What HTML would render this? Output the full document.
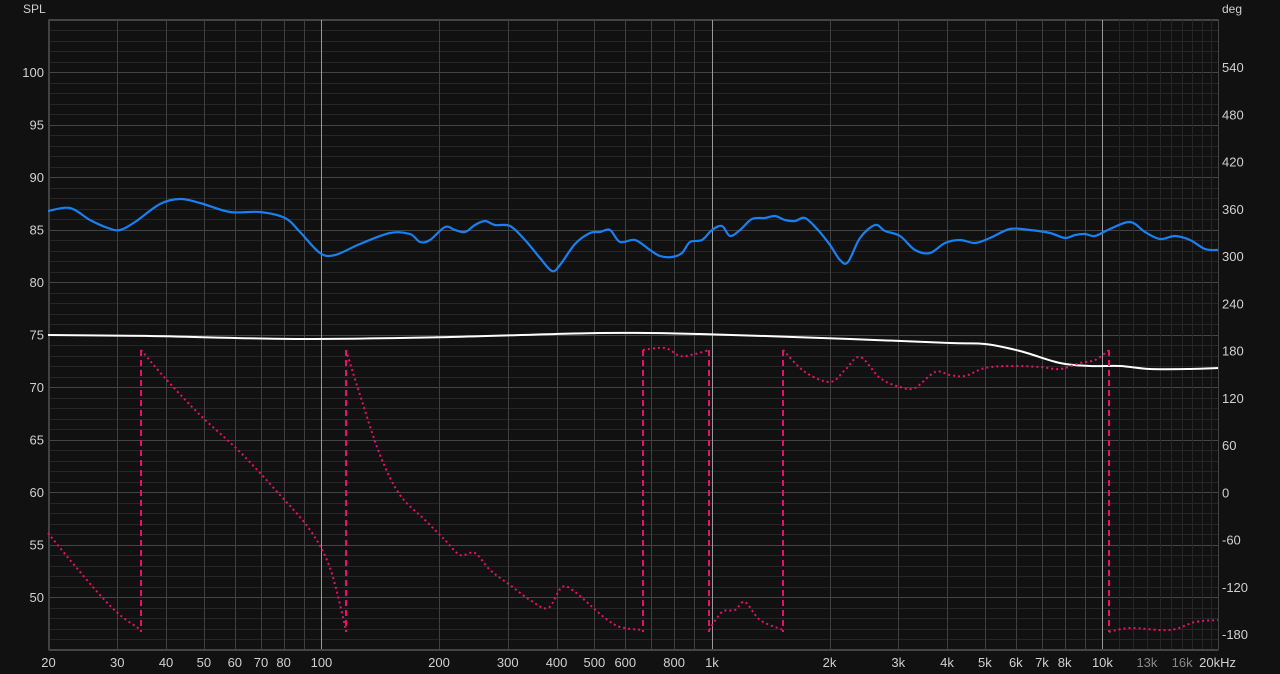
<!DOCTYPE html>
<html><head><meta charset="utf-8"><style>
html,body{margin:0;padding:0;background:#111;}
svg{display:block;font-family:"Liberation Sans",sans-serif;}
</style></head><body>
<svg id="s" width="1280" height="674" viewBox="0 0 1280 674" xmlns="http://www.w3.org/2000/svg">
<rect width="1280" height="674" fill="#111"/>
<g id="grid"></g>
<g id="lbl" font-size="13" fill="#d0d0d0"></g>
<text x="23" y="13" font-size="12" fill="#d0d0d0">SPL</text>
<text x="1222" y="13" font-size="12" fill="#d0d0d0">deg</text>
<path id="wh" fill="none" stroke="#fff" stroke-width="2"/>
<path id="bl" fill="none" stroke="#1a7ff0" stroke-width="2.2"/>
<g fill="none" stroke="#e8106a" stroke-width="2" stroke-dasharray="6,4">
<line x1="141" y1="350" x2="141" y2="632"/><line x1="346" y1="350" x2="346" y2="632"/>
<line x1="643" y1="350" x2="643" y2="632"/><line x1="709" y1="350" x2="709" y2="632"/>
<line x1="783" y1="350" x2="783" y2="632"/><line x1="1109" y1="350" x2="1109" y2="632"/>
</g>
<g id="ph" fill="none" stroke="#e8106a" stroke-width="2" stroke-dasharray="2,3"></g>
</svg>
<script>
(function(){
var NS="http://www.w3.org/2000/svg",g=document.getElementById('grid'),L=document.getElementById('lbl');
var X0=48.5,X1=1218.5,Y0=19.5,Y1=649.5;
function fx(f){return 48.5+390.5*Math.log10(f/20);}
function ln(x1,y1,x2,y2,c){var e=document.createElementNS(NS,'line');e.setAttribute('x1',x1);e.setAttribute('y1',y1);e.setAttribute('x2',x2);e.setAttribute('y2',y2);e.setAttribute('stroke',c);e.setAttribute('stroke-width',1);g.appendChild(e);}
function tx(x,y,s,a,c){var e=document.createElementNS(NS,'text');e.setAttribute('x',x);e.setAttribute('y',y);e.setAttribute('text-anchor',a);if(c)e.setAttribute('fill',c);e.textContent=s;L.appendChild(e);}
for(var d=105;d>=45;d--){var y=72+(100-d)*10.5;if(y<Y0||y>Y1)continue;ln(X0,Math.round(y)+.5,X1,Math.round(y)+.5,d%5==0?'#444':'#262626');}
[10,100,1000].forEach(function(D){for(var k=2;k<10;k++){var f=k*D;if(f<20)continue;var x=Math.round(fx(f))+.5;ln(x,Y0,x,Y1,'#404040');}});
for(var k=11;k<20;k++){var x=Math.round(fx(k*1000))+.5;ln(x,Y0,x,Y1,'#262626');}
[100,1000,10000].forEach(function(f){var x=Math.round(fx(f))+.5;ln(x,Y0,x,Y1,'#999');});
ln(X0,Y0,X1,Y0,'#444');ln(X0,Y1,X1,Y1,'#444');ln(X0,Y0,X0,Y1,'#444');ln(X1,Y0,X1,Y1,'#444');
for(var d=100;d>=50;d-=5){tx(44,72+(100-d)*10.5+5,String(d),'end');}
[540,480,420,360,300,240,180,120,60,0,-60,-120,-180].forEach(function(p,i){tx(1222,67+i*47.25+5,String(p),'start');});
var fl=[[20,'20'],[30,'30'],[40,'40'],[50,'50'],[60,'60'],[70,'70'],[80,'80'],[100,'100'],[200,'200'],[300,'300'],[400,'400'],[500,'500'],[600,'600'],[800,'800'],[1000,'1k'],[2000,'2k'],[3000,'3k'],[4000,'4k'],[5000,'5k'],[6000,'6k'],[7000,'7k'],[8000,'8k'],[10000,'10k'],[13000,'13k',1],[16000,'16k',1]];
fl.forEach(function(a){tx(fx(a[0]),667,a[1],'middle',a[2]?'#888':null);});
tx(1236,667,'20kHz','end');
function smooth(s){var p=s.trim().split(/\s+/).map(function(t){return t.split(',').map(Number);});
var d='M'+p[0][0]+','+p[0][1];for(var i=0;i<p.length-1;i++){var a=p[i-1]||p[i],b=p[i],c=p[i+1],e=p[i+2]||c;
d+=' C'+(b[0]+(c[0]-a[0])/6)+','+(b[1]+(c[1]-a[1])/6)+' '+(c[0]-(e[0]-b[0])/6)+','+(c[1]-(e[1]-b[1])/6)+' '+c[0]+','+c[1];}return d;}
document.getElementById('wh').setAttribute('d',smooth("48,335 150,336 300,339 450,337 600,333 700,334 850,339 950,343 985,344 1020,351 1060,363 1090,366 1120,366 1150,369 1190,369 1218,368"));
document.getElementById('bl').setAttribute('d',smooth("48,211 70,208 90,220 108,228 120,230 135,222 160,204 180,199 200,203 230,212 260,212 285,218 300,232 320,253 335,255 360,244 390,233 410,234 420,242 430,240 445,227 455,230 465,232 475,225 485,221 495,225 510,226 525,240 540,258 552,271 560,265 575,244 590,233 600,232 610,230 620,242 635,240 650,250 660,256 672,257 682,253 690,242 702,240 712,230 722,226 730,236 740,230 752,219 765,218 775,216 785,220 795,221 805,218 818,230 830,245 840,260 848,262 860,238 875,225 885,231 900,236 915,250 930,253 945,243 960,240 975,243 990,238 1010,229 1030,230 1050,233 1065,238 1075,235 1085,234 1095,236 1110,229 1130,222 1145,232 1160,239 1175,236 1190,240 1205,249 1218,250"));
var P=document.getElementById('ph');
["48,533 70,560 100,595 120,615 141,630","141,350 165,378 200,415 240,452 280,495 310,530 330,568 346,630","346,350 360,395 380,455 400,495 425,520 445,540 460,555 475,553 490,570 510,585 530,600 548,608 562,587 575,592 590,605 605,618 620,627 643,630","643,350 665,348 680,356 695,354 709,350","709,630 722,612 735,610 745,602 760,620 783,630","783,350 805,372 830,382 845,370 860,357 880,378 900,387 915,388 935,372 950,375 965,376 985,368 1010,366 1040,367 1060,369 1080,363 1095,360 1109,350","1109,632 1130,628 1170,630 1195,622 1218,620"].forEach(function(s){var e=document.createElementNS(NS,'path');e.setAttribute('d',smooth(s));P.appendChild(e);});
})();
</script>
</body></html>
